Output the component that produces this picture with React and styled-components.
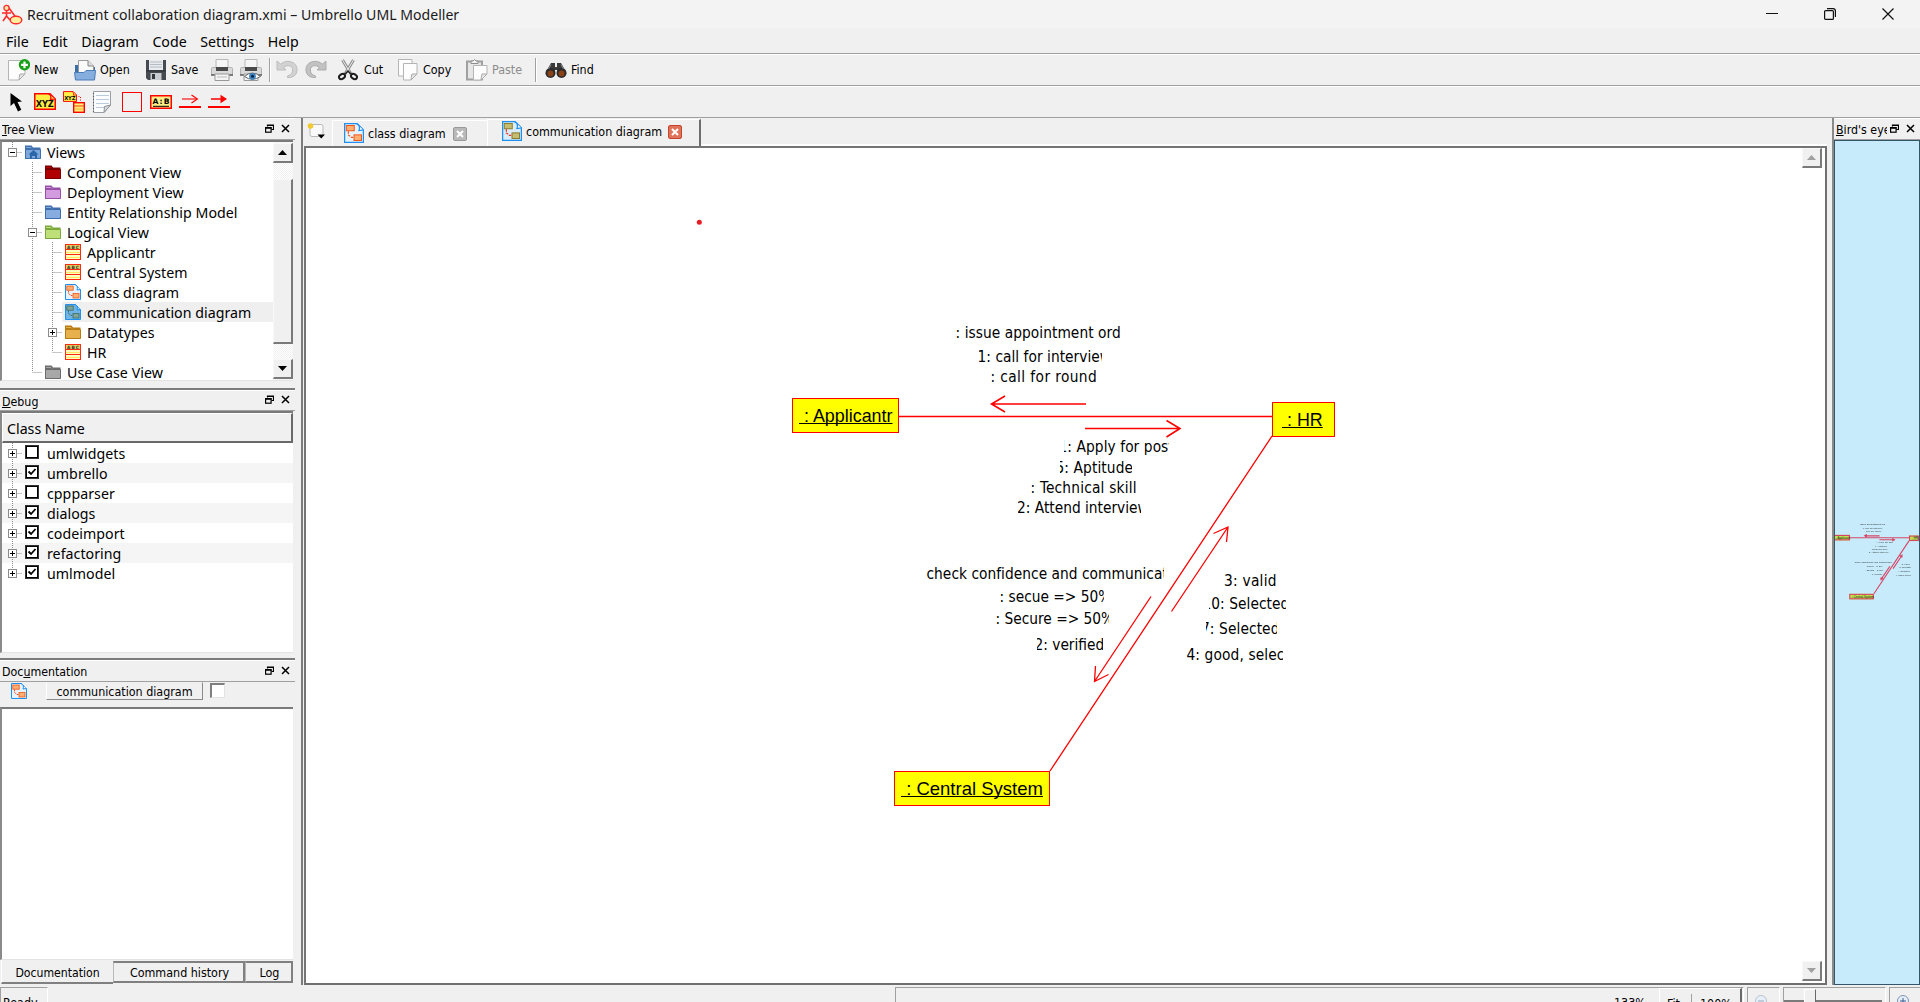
import React from "react";
import styled, { createGlobalStyle, css } from "styled-components";

const UI = '"Noto Sans", "Open Sans", sans-serif';
const SMALL = '"DejaVu Sans Condensed", "DejaVu Sans", sans-serif';

const Global = createGlobalStyle`
  * { box-sizing: border-box; }
  html, body { margin: 0; padding: 0; overflow: hidden; background: #f0f0f0; }
  svg { display: block; flex: none; }
`;

const Window = styled.div`
  width: 1920px;
  height: 1002px;
  display: flex;
  flex-direction: column;
  overflow: hidden;
  background: #f0f0f0;
  color: #000;
  font-family: ${UI};
  font-size: 14.2px;
`;

/* ---------- title, menu, toolbars ---------- */

const TitleBar = styled.header`
  flex: none;
  height: 28px;
  display: flex;
  align-items: center;
  gap: 4px;
  padding-left: 2px;
  background: #f3f3f3;
`;
const TitleText = styled.span`
  flex: 1;
  font-size: 14.1px;
  line-height: 28px;
  padding-top: 1px;
  color: #1a1a1a;
`;
const WindowButtons = styled.div`
  display: flex;
  gap: 46px;
  padding-right: 26px;
`;
const MenuBar = styled.nav`
  flex: none;
  height: 25px;
  display: flex;
  gap: 13.6px;
  padding: 3px 0 0 6px;
  font-size: 14.2px;
  line-height: 22px;
`;
const Toolbar = styled.div`
  flex: none;
  height: 32px;
  display: flex;
  align-items: center;
  border-top: 1px solid #a0a0a0;
  box-shadow: inset 0 1px 0 #fff;
  padding: ${(p) => p.$pt ?? 2}px 0 0 8px;
`;
const ToolButton = styled.div`
  flex: none;
  width: ${(p) => p.$w}px;
  display: flex;
  align-items: center;
  gap: ${(p) => p.$gap || 4}px;
  font: 12.4px/16px ${SMALL};
  color: ${(p) => (p.$off ? "#8c8c8c" : "#000")};
`;
const Sep = styled.i`
  flex: none;
  width: 2px;
  height: 24px;
  margin-right: ${(p) => p.$after}px;
  background: linear-gradient(90deg, #a0a0a0 50%, #fff 50%);
`;

/* ---------- docks ---------- */

const Workspace = styled.div`
  flex: none;
  height: 868px;
  display: flex;
  border-top: 1px solid #a0a0a0;
`;
const LeftColumn = styled.aside`
  flex: none;
  width: 295px;
  display: flex;
  flex-direction: column;
`;
const Dock = styled.section`
  flex: none;
  height: ${(p) => p.$h}px;
  width: 100%;
  display: flex;
  flex-direction: column;
  ${(p) => p.$ruled && css`border-top: 2px solid #7c7c7c;`}
`;
const DockTitle = styled.div`
  flex: none;
  height: ${(p) => p.$h || 22}px;
  display: flex;
  align-items: center;
  justify-content: space-between;
  border-top: 1px solid #fff;
  border-bottom: 1px solid #a0a0a0;
  padding: 0 5px 0 2px;
  font: 12.3px/18px ${SMALL};
  overflow: hidden;
  white-space: nowrap;
`;
const DockName = styled.span`
  overflow: hidden;
  padding-top: 2px;
  max-width: ${(p) => p.$max || 200}px;
`;
const DockButtons = styled.span`
  flex: none;
  display: flex;
  gap: 7px;
  padding-bottom: 2px;
`;
const Sunken = styled.div`
  flex: none;
  height: ${(p) => p.$h}px;
  width: 293px;
  display: flex;
  overflow: hidden;
  background: #fff;
  border: 1px solid #e3e3e3;
  border-right-width: 0;
  border-top: 2px solid #7a7a7a;
  border-left: 2px solid #8a8a8a;
`;
const List = styled.div`
  flex: 1;
  display: flex;
  flex-direction: column;
`;
const Row = styled.div`
  flex: none;
  height: 20px;
  display: flex;
  align-items: center;
  line-height: 20px;
  background: ${(p) => (p.$alt ? "#f5f5f5" : "transparent")};
`;
const RowBody = styled.div`
  flex: 1;
  height: 20px;
  display: flex;
  align-items: center;
  gap: 6px;
  padding-left: 3px;
  white-space: nowrap;
  background: ${(p) => (p.$selected ? "#efefef" : "transparent")};
`;
const RowText = styled.span`
  font-size: 14.2px;
  line-height: 20px;
  letter-spacing: 0.04px;
  padding-top: 1px;
`;
const CheckRow = styled(RowBody)`
  gap: 9px;
  padding-left: 4px;
`;
const Check = styled.i`
  width: 12px;
  height: 12px;
  margin-bottom: 2px;
  border: 1px solid #000;
  outline: 0.5px solid #333;
  display: flex;
  background: #fff;
`;
const Header = styled.div`
  flex: none;
  height: 30px;
  padding: 1px 0 0 4px;
  border: 1px solid #fff;
  border-right: 2px solid #696969;
  border-bottom: 2px solid #696969;
  background: #f0f0f0;
  line-height: 27px;
  font-size: 14.2px;
`;
const ScrollBar = styled.div`
  flex: none;
  width: 20px;
  display: flex;
  flex-direction: column;
  background: repeating-conic-gradient(#f0f0f0 0 25%, #fff 0 50%) 0 0 / 2px 2px;
`;
const Raised = styled.div`
  flex: none;
  width: ${(p) => p.$w || 20}px;
  height: ${(p) => p.$h || 20}px;
  display: flex;
  align-items: center;
  justify-content: center;
  background: #f0f0f0;
  border: 1px solid #f8f8f8;
  border-right: 2px solid #7a7a7a;
  border-bottom: 2px solid #7a7a7a;
  margin-top: ${(p) => p.$mt || 0}px;
`;
const DocBar = styled.div`
  flex: none;
  height: 25px;
  display: flex;
  padding-left: 11px;
  padding-top: 1px;
`;
const DocButton = styled.div`
  width: 157px;
  height: 18px;
  margin: -1px 7px 0 19px;
  text-align: center;
  border: 1px solid #fff;
  border-top-color: #f0f0f0;
  border-right-color: #8a8a8a;
  border-bottom-color: #8a8a8a;
  font: 12.4px/17px ${SMALL};
`;
const DocCheck = styled.i`
  width: 15px;
  height: 15px;
  background: #fff;
  border: 1px solid #e3e3e3;
  border-top: 2px solid #808080;
  border-left: 2px solid #808080;
`;
const BottomTabs = styled.div`
  flex: none;
  display: flex;
  align-items: flex-start;
  width: 294px;
  padding-left: 1px;
`;
const BottomTab = styled.div`
  width: ${(p) => p.$w}px;
  height: ${(p) => (p.$active ? 24 : 22)}px;
  margin-top: ${(p) => (p.$active ? 0 : 1)}px;
  padding-left: ${(p) => (p.$active ? 0 : 2)}px;
  text-align: center;
  font: ${(p) => (p.$active ? 12.15 : 12.4)}px/${(p) => (p.$active ? 26 : 20)}px ${SMALL};
  border-left: 1px solid ${(p) => (p.$active ? "#fff" : "#b8b8b8")};
  border-bottom: 2px solid #808080;
  border-right: ${(p) => (p.$active ? "0" : "2px solid #808080")};
  border-top: ${(p) => (p.$active ? "0" : "2px solid #808080")};
`;

/* ---------- editor ---------- */

const Editor = styled.main`
  flex: none;
  width: 1526px;
  margin-left: 6px;
  display: flex;
  flex-direction: column;
  border-left: 2px solid #7c7c7c;
`;
const TabRow = styled.div`
  flex: none;
  height: 28px;
  display: flex;
  align-items: flex-end;
`;
const NewTab = styled.div`
  width: 29px;
  height: 28px;
  padding: 5px 0 0 4px;
`;
const Tab = styled.div`
  flex: none;
  width: ${(p) => p.$w}px;
  height: ${(p) => (p.$active ? 27 : 26)}px;
  display: flex;
  align-items: flex-start;
  padding: ${(p) => (p.$active ? "1px 0 0 14px" : "2px 0 0 11px")};
  border-left: 1px solid #fff;
  border-top: 1px solid #fff;
  border-right: ${(p) => (p.$active ? "2px solid #6e6e6e" : "0")};
  font: 12.4px/20px ${SMALL};
`;
const TabText = styled.span`
  padding: 1px ${(p) => p.$pr || 6}px 0 4px;
`;
const TabClose = styled.i`
  width: 14px;
  height: 14px;
  margin-top: 4px;
  border-radius: 2px;
  display: flex;
  align-items: center;
  justify-content: center;
  background: ${(p) => (p.$hot ? "#e0735c" : "#b9b9b9")};
  border: 1px solid ${(p) => (p.$hot ? "#c4452b" : "#999")};
`;
const TabFill = styled.div`
  flex: 1;
  height: 2px;
  background: #fff;
`;
const CanvasFrame = styled.div`
  flex: 1;
  min-height: 0;
  margin-left: 1px;
  display: flex;
  border-top: 2px solid #757575;
  border-left: 2px solid #757575;
  border-right: 2px solid #707070;
  border-bottom: 2px solid #707070;
  background: #fff;
`;
const Canvas = styled.div`
  flex: 1;
  position: relative;
  overflow: hidden;
`;
const CanvasScroll = styled.div`
  flex: none;
  width: 23px;
  display: flex;
  flex-direction: column;
  justify-content: space-between;
  padding: 0 0 2px;
`;

/* Diagram items sit on a free canvas. */
const Scene = styled.div`
  position: absolute;
  left: ${(p) => p.$x}px;
  top: ${(p) => p.$y}px;
  width: 1920px;
  height: 1002px;
  transform-origin: 0 0;
  transform: scale(${(p) => p.$scale || 1});
  opacity: ${(p) => (p.$scale ? 0.85 : 1)};
`;
const Actor = styled.div`
  position: absolute;
  left: ${(p) => p.$x}px;
  top: ${(p) => p.$y}px;
  width: ${(p) => p.$w}px;
  height: 35px;
  padding-left: ${(p) => p.$pad || 6}px;
  white-space: pre;
  background: ${(p) => (p.$mini ? "#c4e02c" : "#ffff00")};
  border: ${(p) => (p.$mini ? 7 : 1)}px solid ${(p) => (p.$mini ? "#d8284a" : "#ff0000")};
  font: ${(p) => p.$fs}px/${(p) => (p.$mini ? 22 : 34)}px "Liberation Sans", Arial, sans-serif;
  text-decoration: underline;
  text-decoration-thickness: 1px;
  text-underline-offset: 1px;
  text-decoration-skip-ink: none;
`;
const Clip = styled.div`
  position: absolute;
  left: ${(p) => p.$x}px;
  top: ${(p) => p.$y - 15}px;
  width: ${(p) => p.$w}px;
  height: 20px;
  overflow: hidden;
  white-space: pre;
  font: 15.3px/20px ${SMALL};
`;
const ClipText = styled.span`
  display: block;
  width: max-content;
  margin-left: ${(p) => p.$shift}px;
  letter-spacing: ${(p) => p.$ls || 0}px;
`;
const Lines = styled.svg`
  position: absolute;
  left: 0;
  top: 0;
`;

const RightDock = styled.aside`
  flex: none;
  width: 88px;
  margin-left: 5px;
  height: 867px;
  display: flex;
  flex-direction: column;
  border-left: 2px solid #8a8a8a;
`;
const Bird = styled.div`
  flex: 1;
  position: relative;
  overflow: hidden;
  background: #c8ebfb;
  border: 1px solid #33566a;
`;

/* ---------- status bar ---------- */

const StatusBar = styled.footer`
  flex: none;
  height: 17px;
  display: flex;
  gap: 3px;
  padding-top: 2px;
  overflow: hidden;
  font: 12.4px/16px ${SMALL};
`;
const StatusCell = styled.div`
  flex: none;
  width: ${(p) => p.$w}px;
  height: 30px;
  margin-left: ${(p) => p.$ml || 0}px;
  display: flex;
  padding-left: ${(p) => p.$pl || 0}px;
  border-top: 1px solid #a0a0a0;
  border-left: 1px solid #a0a0a0;
  border-right: 1px solid #fff;
`;
const StatusText = styled.span`
  padding-top: 7px;
  width: ${(p) => p.$w || 40}px;
`;
const FitGroup = styled.div`
  width: 83px;
  height: 28px;
  display: flex;
  background: #f0f0f0;
  padding-left: 7px;
  border-left: 1px solid #fff;
  border-top: 1px solid #fff;
  border-right: 2px solid #696969;
`;
const FitRule = styled.i`
  width: 1px;
  height: 20px;
  margin: 5px 8px 0 0;
  background: #a0a0a0;
`;
const Groove = styled.i`
  height: 3px;
  margin-top: 12px;
  width: ${(p) => p.$w}px;
  border-top: 2px solid #7a7a7a;
`;
const Knob = styled.i`
  width: 12px;
  height: 26px;
  margin-top: 1px;
  background: #f0f0f0;
  border-left: 1px solid #fff;
  border-top: 1px solid #fff;
  border-right: 1px solid #696969;
`;

/* ---------- drawings ---------- */

const Page = ({ x = 0, y = 0, w = 15, h = 19 }) => (
  <g transform={`translate(${x} ${y})`}>
    <path d={`M.5 .5H${w}V${h - 6}L${w - 6} ${h}H.5Z`} fill="#fdfdfd" stroke="#b4b4b4" />
    <path d={`M${w} ${h - 6}H${w - 5}Q${w - 6} ${h - 2} ${w - 6} ${h}Z`} fill="#e8e8e8" stroke="#a8a8a8" />
  </g>
);
const I = ({ s = 22, h, children, vb }) => (
  <svg width={s} height={h || s} viewBox={vb || `0 0 ${s} ${h || s}`} fill="none">{children}</svg>
);
const NewIcon = () => (
  <I><Page x={0} y={1} w={17} h={20} /><circle cx="16.5" cy="5.8" r="5.7" fill="#16a016" /><path d="M16.5 2.4V9.2M13.1 5.8H19.9" stroke="#fff" strokeWidth="2.2" /></I>
);
const OpenIcon = () => (
  <I><path d="M1 6H7L9 8H21V20H1Z" fill="#3a6ea8" /><path d="M4.500 1.500H14L19.500 7V14H4.500Z" fill="#fafafa" stroke="#9a9a9a" /><path d="M14 1.500V7H19.500" fill="#ddd" stroke="#888" /><path d="M.5 13.500H10L12 11.500H21.500L20.500 21H1.500Z" fill="#86aede" stroke="#4b7dba" /></I>
);
const SaveIcon = () => (
  <I><path d="M0 1H20V21H2L0 19Z" fill="#454a50" /><rect x="3" y="1" width="14" height="10" fill="#e9ecef" /><path d="M4 3H16M4 5.500H16M4 8H16" stroke="#b4bac2" /><rect x="4.500" y="14" width="11" height="7" fill="#c9cccf" /><rect x="6" y="15" width="3" height="5" fill="#33373c" /><path d="M0 12H20" stroke="#2c2f33" /></I>
);
const PrintIcon = ({ eye }) => (
  <I><path d="M5 9V.5H17V9" fill="#f6f6f6" stroke="#b8b8b8" /><path d="M.5 9.500Q.5 8.500 1.500 8.500H20.500Q21.500 8.500 21.500 9.500V15.500H.5Z" fill="#d9d9d9" stroke="#b0b0b0" /><rect x="5" y="8" width="12" height="4" fill="#4a4a4a" /><path d="M0 16H22" stroke="#666" strokeWidth="1.600" /><path d="M4 15H18V21.500H4Z" fill="#f4f4f4" stroke="#999" /><path d="M6 18H16" stroke="#bbb" />
    {eye && <><path d="M4.500 17.500Q12 10.500 20.500 17.500Q12 23 4.500 17.500Z" fill="#fff" stroke="#666" /><circle cx="12.500" cy="17.300" r="3.400" fill="#3b82c4" /><circle cx="12.500" cy="17.300" r="1.500" fill="#10243c" /></>}
  </I>
);
const UndoIcon = ({ flip }) => (
  <I><g transform={flip ? "translate(22 0) scale(-1 1)" : undefined}><path d="M1 2V11H10L7.500 8.500Q11 5.500 14.500 7Q17.500 9 16.500 13Q15.500 16 11.500 17V18.500Q18 19 20.500 14Q22.500 8 18 4.200Q11.500 0 4.500 5Z" fill={flip ? "#c2c2c2" : "#d2d2d2"} stroke={flip ? "#adadad" : "#bdbdbd"} /></g></I>
);
const CutIcon = () => (
  <I s={20} h={22}><path d="M4.500 1L13 15M15.500 1L7 15" stroke="#8c8c8c" strokeWidth="3" /><path d="M4.500 1L13 15M15.500 1L7 15" stroke="#eee" strokeWidth="1" /><ellipse cx="4" cy="17.500" rx="3.200" ry="2.300" transform="rotate(-35 4 17.500)" stroke="#1c1c1c" strokeWidth="2" /><ellipse cx="16" cy="17.500" rx="3.200" ry="2.300" transform="rotate(35 16 17.500)" stroke="#1c1c1c" strokeWidth="2" /><path d="M7 15L10 12L13 15" stroke="#222" strokeWidth="1.500" /></I>
);
const CopyIcon = () => (<I s={21} h={22}><Page x={0} y={0} w={14} h={17} /><Page x={5} y={4} w={14} h={17} /></I>);
const PasteIcon = () => (
  <I><rect x="1" y="2.500" width="15" height="18" fill="#e6e6e6" stroke="#a0a0a0" strokeWidth="2" /><path d="M5 4.500V2H7Q8.500-1 10 2H12V4.500Z" fill="#f4f4f4" stroke="#8c8c8c" /><Page x={7} y={6} w={14} h={15} /></I>
);
const FindIcon = () => (
  <I><path d="M2 11L6 4H10V8H12V4H16L20 11L21.500 15H12V11H10V15H.5Z" fill="#3a3a3a" /><circle cx="5.500" cy="14" r="5" fill="#2b2b2b" /><circle cx="16.500" cy="14" r="5" fill="#2b2b2b" /><circle cx="5.500" cy="14.500" r="3" fill="#8a4216" /><circle cx="16.500" cy="14.500" r="3" fill="#8a4216" /><path d="M6 5.500L3.500 10M16 5.500L18.500 10" stroke="#888" /></I>
);
const CursorIcon = () => (<I s={16} h={20}><path d="M2.500 1V14L6 11L10 19.500L13.300 17.800L9.500 10L14 9.500Z" fill="#000" /></I>);
const XyzShape = () => (
  <><path d="M.75 .75H16L21.250 6V16.250H.75Z" fill="#ffee44" stroke="#ff0000" strokeWidth="1.500" /><path d="M14.500 1Q18 2.500 16.500 6.500L21 6" fill="#ffd75a" stroke="#ff0000" strokeWidth="1.200" /><text x="1.800" y="14.200" fontFamily="DejaVu Sans, sans-serif" fontWeight="700" fontSize="8.400" textLength="18" fill="#111">XYZ</text></>
);
const XyzIcon = () => (<I h={17}><XyzShape /></I>);
const XyzLinkIcon = () => (
  <I><svg width="14" height="11" viewBox="0 0 22 17"><XyzShape /></svg><path d="M13 5.500H17.500V11" stroke="#ff0000" strokeDasharray="1 1.500" /><rect x="10.700" y="11.700" width="10.600" height="9.600" fill="#ffef70" stroke="#ff0000" strokeWidth="1.400" /><path d="M11 15H21" stroke="#ff3a20" /><path d="M12 18H20" stroke="#f0b040" /></I>
);
const NoteIcon = () => (
  <I s={20} h={22}><path d="M1.500 .5H18.500V14L12 21.500H1.500Z" fill="#fbfcfd" stroke="#9aa0a6" /><path d="M4 4.500H17M4 8.500H17M4 12.500H17M4 16.500H12" stroke="#b9cbdd" /><path d="M18.500 14L12.500 15.500L12 21.500Z" fill="#ddd" stroke="#8c9196" /><path d="M1.500 2V21" stroke="#555" strokeDasharray="1 2" /></I>
);
const BoxIcon = () => (<I s={20}><rect x=".5" y=".5" width="19" height="19" stroke="#ff0000" /></I>);
const AbIcon = () => (
  <I h={14}><rect x=".75" y=".75" width="20.500" height="12.500" fill="#ffef86" stroke="#ff0000" strokeWidth="1.500" /><text x="2.500" y="9.400" fontFamily="DejaVu Sans, sans-serif" fontWeight="700" fontSize="7.600" textLength="17" fill="#000">A:B</text><path d="M3 11.300H19" stroke="#000" /></I>
);
const ArrowIcon = ({ solid }) => (
  <I h={16}><path d="M0 13H22" stroke="#ff0000" strokeWidth="2" /><path d="M3 5H18" stroke="#ff0000" strokeWidth={solid ? 1.500 : 1.100} />{solid ? <path d="M12.500 .8L19 5L12.500 9.200Z" fill="#ff0000" /> : <path d="M12.500 1L18.500 5L12.500 9" stroke="#ff0000" strokeWidth="1.100" />}</I>
);
const AppIcon = () => (
  <I s={21}><path d="M7 4L15 15" stroke="#ff2a2a" strokeWidth="1.600" /><circle cx="4.500" cy="4" r="2.600" fill="#ffe9a8" stroke="#ff2a2a" strokeWidth="1.300" /><path d="M0 9H9M4.500 7V12L1 17M4.500 12L8 16" stroke="#ff2a2a" strokeWidth="1.600" /><ellipse cx="14" cy="16" rx="5.800" ry="3.800" fill="#ffee9c" stroke="#ff2a2a" strokeWidth="1.400" /></I>
);
const Folder = ({ c, home }) => (
  <I s={16}><path d="M0 1.500H6.500L8 3.500H15.500V15H0Z" fill={c[1]} /><path d="M.5 5.500H15.500V14.500H.5Z" fill={c[0]} stroke={c[1]} /><path d="M1 3.500H6L7 4.500" stroke={c[0]} />{home && <path d="M3.500 10.500L8.500 6L13.500 10.500H12V15H10V12H7V15H5V10.500Z" fill="#2c65a8" />}</I>
);
const ClassIcon = () => (
  <I s={16}><rect x=".5" y=".5" width="15" height="15" fill="#ffffc0" stroke="#ff2a10" /><rect x="1" y="1" width="14" height="4" fill="#e0cc60" /><text x="2" y="4.800" fontFamily="DejaVu Sans, sans-serif" fontWeight="700" fontSize="4.400" textLength="12" fill="#333">ABC</text><path d="M0 5.500H16M0 10.500H16" stroke="#ff2a10" /><path d="M1 8.500H15M1 13.500H15" stroke="#ffe860" /></I>
);
const DiagramIcon = ({ s = 16, kind }) => {
  const [bg, fg, edge] = { cls: ["#e6f3ff", "#ffb070", "#f0561c"], com: ["#d8ecfa", "#c4bc70", "#8a7c2c"], sel: ["#6fb4e4", "#7fa696", "#3c6c6c"] }[kind];
  return (
    <I s={s} vb="0 0 16 16"><path d="M.5 .5H10.500L15.500 5.500V15.500H.5Z" fill={bg} stroke="#1e90f0" /><path d="M10 .6Q13.500 2 12 6L15.500 5.500" fill={kind === "sel" ? "#a8d4f0" : "#fff"} stroke="#1e90f0" /><rect x="1.800" y="2" width="6.400" height="4.200" fill={fg} stroke={edge} strokeWidth=".8" /><rect x="8" y="9.500" width="6" height="4.500" fill={fg} stroke={edge} strokeWidth=".8" /><path d="M3.500 6.500V9.500L6 11.500H8" stroke={kind === "com" ? "#f03020" : edge} strokeDasharray="2 .8" /></I>
  );
};
const Guide = ({ t }) => (
  <I s={20}>
    <g stroke="#8c8c8c" strokeDasharray="1 1">
      {/[vt]/.test(t) && <path d="M10.500 0V20" />}
      {/[et]/.test(t) && <path d="M10.500 10.500H20" />}
      {t[0] === "e" && <path d="M10.500 0V10" />}
    </g>
    {/[+-]/.test(t) && <><rect x="6.500" y="6.500" width="8" height="8" fill="#fff" stroke="#8c8c8c" /><path d="M8 10.500H13" stroke="#000" />{t.includes("+") && <path d="M10.500 8V13" stroke="#000" />}</>}
  </I>
);
const FloatIcon = () => (<I s={9}><path d="M2.500 2.500V1H8.500V5.500H6.500M2.500 1.500H8.500" stroke="#000" strokeWidth="1.200" /><rect x=".6" y="3.600" width="5.500" height="4.600" stroke="#000" strokeWidth="1.200" /><path d="M0 4H6.500" stroke="#000" strokeWidth="1.500" /></I>);
const CloseIcon = () => (<I s={9}><path d="M1 1L8 8M8 1L1 8" stroke="#000" strokeWidth="1.500" /></I>);
const Tri = ({ down, c = "#000", s = 9 }) => (<svg width={s} height="5" viewBox="0 0 9 5"><path d={down ? "M0 0H9L4.500 5Z" : "M0 5H9L4.500 0Z"} fill={c} /></svg>);
const ZoomGlass = ({ plus }) => (<I s={14}><circle cx="6" cy="6" r="5.500" fill="#e6eef8" stroke={plus ? "#7d94b4" : "#b8c2d0"} /><path d={plus ? "M3 6H9M6 3V9" : "M3 6H9"} stroke={plus ? "#3a5c90" : "#9aa8bc"} /></I>);

/* ---------- data ---------- */

const BLUE = ["#86ace0", "#3f6cab"];
const TREE = [
  ["-e", "Views", <Folder c={["#7ea8dc", "#3f6fae"]} home />],
  [" t", "Component View", <Folder c={["#b00000", "#780000"]} />],
  [" t", "Deployment View", <Folder c={["#d49be0", "#9650a8"]} />],
  [" t", "Entity Relationship Model", <Folder c={BLUE} />],
  [" t-", "Logical View", <Folder c={["#bfe078", "#7ba83c"]} />],
  [" vt", "Applicantr", <ClassIcon />],
  [" vt", "Central System", <ClassIcon />],
  [" vt", "class diagram", <DiagramIcon kind="cls" />],
  [" vt", "communication diagram", <DiagramIcon kind="sel" />, true],
  [" vt+", "Datatypes", <Folder c={["#e8b04c", "#b87c14"]} />],
  [" ve", "HR", <ClassIcon />],
  [" e", "Use Case View", <Folder c={["#a8a8a8", "#6c6c6c"]} />],
];
const cells = (code) => (code === "-e" ? ["e-"] : code.match(/[ vte][+-]?/g));

const CLASSES = [["umlwidgets", 0], ["umbrello", 1], ["cppparser", 0], ["dialogs", 1], ["codeimport", 1], ["refactoring", 1], ["umlmodel", 1]];

/* text, clip left, clip right, text start, baseline, letter spacing */
const LABELS = [
  [": issue appointment order", 955, 1120.5, 955.5, 338, 0.06],
  ["1: call for interview", 979, 1102, 977.5, 362, 0.04],
  [": call for round", 990, 1098, 990.5, 382, 0.4],
  ["1: Apply for post", 1064, 1169, 1058.5, 452, 0.08],
  ["5: Aptitude", 1059.5, 1131.5, 1055.5, 473, 0.1],
  [": Technical skill", 1030, 1138, 1030.5, 493, 0.2],
  ["2: Attend interview", 1018, 1141, 1017, 513],
  ["check confidence and communication", 926, 1164, 926.5, 579, 0.04],
  [": secue => 50%", 998, 1104, 999.5, 602],
  [": Secure => 50%", 994, 1109, 995.5, 624],
  ["2: verified", 1037, 1103, 1034.5, 650],
  ["3: valid", 1223, 1279, 1224, 586, 0.25],
  ["10: Selected", 1209, 1285.5, 1202.5, 609, 0.05],
  ["7: Selected", 1206, 1276.5, 1201, 634, 0.1],
  ["4: good, selected", 1187, 1283, 1186.5, 660, 0.12],
];

const Diagram = ({ mini }) => {
  const line = mini ? "#d8284a" : "#ff0000";
  return (
    <>
      <Lines width="1920" height="1002" fill="none" stroke={line} strokeWidth={mini ? 7 : 1.3}>
        <path d="M898 416.500H1272M1272 436L1050 771" />
        <path d="M1086 404H992M1005 396L991.500 404L1005 412" strokeWidth={mini ? 7 : 1.6} />
        <path d="M1085 428.500H1180M1166.500 420.500L1180 428.500L1166.500 437" strokeWidth={mini ? 7 : 1.6} />
        <path d="M1171.500 611.500L1228 527M1213.500 533.500L1228 527L1226.500 542" />
        <path d="M1151 596.500L1094.500 681.500M1095.500 666L1094.500 681.500L1108.500 674.500" />
        {!mini && <circle cx="699.300" cy="222.300" r="2.500" fill="#e81c24" stroke="none" />}
      </Lines>
      <Actor $mini={mini} $x={792} $y={398} $w={107} $fs={17.9}>{" : Applicantr"}</Actor>
      <Actor $mini={mini} $x={1272} $y={402} $w={63} $fs={17.9} $pad={9}>{" : HR"}</Actor>
      <Actor $mini={mini} $x={894} $y={771} $w={156} $fs={18.5}>{" : Central System"}</Actor>
      {LABELS.map(([t, l, r, s, b, ls]) => (
        <Clip key={t} $x={l} $y={b} $w={r - l}><ClipText $shift={s - l} $ls={ls}>{t}</ClipText></Clip>
      ))}
    </>
  );
};

const Title = ({ pre = "", k, rest, h, max }) => (
  <DockTitle $h={h}>
    <DockName $max={max}>{pre}<u>{k}</u>{rest}</DockName>
    <DockButtons><FloatIcon /><CloseIcon /></DockButtons>
  </DockTitle>
);

export default function App() {
  return (
    <Window>
      <Global />
      <TitleBar>
        <AppIcon />
        <TitleText>Recruitment collaboration diagram.xmi – Umbrello UML Modeller</TitleText>
        <WindowButtons>
          <I s={12}><path d="M0 5.500H12" stroke="#111" /></I>
          <I s={12}><rect x=".6" y="2.600" width="8.800" height="8.800" rx="1" stroke="#111" strokeWidth="1.200" /><path d="M3 .6H9Q11.400 .6 11.400 3V9" stroke="#111" strokeWidth="1.200" /></I>
          <I s={12}><path d="M.5 .5L11.500 11.500M11.500 .5L.5 11.500" stroke="#111" strokeWidth="1.200" /></I>
        </WindowButtons>
      </TitleBar>
      <MenuBar>
        {["File", "Edit", "Diagram", "Code", "Settings", "Help"].map((m) => <span key={m}>{m}</span>)}
      </MenuBar>
      <Toolbar $pt={1}>
        <ToolButton $w={66}><NewIcon />New</ToolButton>
        <ToolButton $w={72}><OpenIcon />Open</ToolButton>
        <ToolButton $w={65} $gap={3}><SaveIcon />Save</ToolButton>
        <ToolButton $w={29}><PrintIcon /></ToolButton>
        <ToolButton $w={29}><PrintIcon eye /></ToolButton>
        <Sep $after={5} />
        <ToolButton $w={29}><UndoIcon /></ToolButton>
        <ToolButton $w={33}><UndoIcon flip /></ToolButton>
        <ToolButton $w={60} $gap={6}><CutIcon />Cut</ToolButton>
        <ToolButton $w={68}><CopyIcon />Copy</ToolButton>
        <ToolButton $w={69} $off><PasteIcon />Paste</ToolButton>
        <Sep $after={8} />
        <ToolButton $w={60}><FindIcon />Find</ToolButton>
      </Toolbar>
      <Toolbar $pt={0}>
        <ToolButton $w={26}><CursorIcon /></ToolButton>
        <ToolButton $w={29}><XyzIcon /></ToolButton>
        <ToolButton $w={29}><XyzLinkIcon /></ToolButton>
        <ToolButton $w={30}><NoteIcon /></ToolButton>
        <ToolButton $w={28}><BoxIcon /></ToolButton>
        <ToolButton $w={29}><AbIcon /></ToolButton>
        <ToolButton $w={29}><ArrowIcon /></ToolButton>
        <ToolButton $w={29}><ArrowIcon solid /></ToolButton>
      </Toolbar>

      <Workspace>
        <LeftColumn>
          <Dock $h={270}>
            <Title k="T" rest="ree View" />
            <Sunken $h={241}>
              <List>
                {TREE.map(([code, name, icon, sel]) => (
                  <Row key={name}>
                    {cells(code).map((t, i) => <Guide key={i} t={t} />)}
                    <RowBody $selected={sel}>{icon}<RowText>{name}</RowText></RowBody>
                  </Row>
                ))}
              </List>
              <ScrollBar>
                <Raised $mt={1}><Tri /></Raised>
                <Raised $h={165} $mt={16} />
                <Raised $mt={15}><Tri down /></Raised>
              </ScrollBar>
            </Sunken>
          </Dock>
          <Dock $h={270} $ruled>
            <Title k="D" rest="ebug" h={21} />
            <Sunken $h={242}>
              <List>
                <Header>Class Name</Header>
                {CLASSES.map(([name, on], i) => (
                  <Row key={name} $alt={i % 2 === 1}>
                    <Guide t={i === 6 ? "e+" : "t+"} />
                    <CheckRow>
                      <Check>{on ? <I s={10}><path d="M1.500 4.500L4 7L8.500 2" stroke="#000" strokeWidth="1.800" /></I> : null}</Check>
                      <RowText>{name}</RowText>
                    </CheckRow>
                  </Row>
                ))}
              </List>
            </Sunken>
          </Dock>
          <Dock $h={327} $ruled>
            <Title pre="Doc" k="u" rest="mentation" h={22} />
            <DocBar>
              <DiagramIcon kind="cls" />
              <DocButton>communication diagram</DocButton>
              <DocCheck />
            </DocBar>
            <Sunken $h={253} />
            <BottomTabs>
              <BottomTab $w={112} $active>Documentation</BottomTab>
              <BottomTab $w={132}>Command history</BottomTab>
              <BottomTab $w={48}>Log</BottomTab>
            </BottomTabs>
          </Dock>
        </LeftColumn>

        <Editor>
          <TabRow>
            <NewTab>
              <I s={19} h={17}><rect x="3" y="1.500" width="13" height="12" rx="2" fill="#fafafa" stroke="#b8b8b8" /><circle cx="3.500" cy="3" r="2.800" fill="#f0c830" /><path d="M10.500 11.500H18L14.200 15.500Z" fill="#000" /></I>
            </NewTab>
            <Tab $w={155}><DiagramIcon s={20} kind="cls" /><TabText $pr={7}>class diagram</TabText>
              <TabClose><I s={8}><path d="M1 1L7 7M7 1L1 7" stroke="#fff" strokeWidth="2" /></I></TabClose></Tab>
            <Tab $w={214} $active><DiagramIcon s={20} kind="com" /><TabText>communication diagram</TabText>
              <TabClose $hot><I s={8}><path d="M1 1L7 7M7 1L1 7" stroke="#fff" strokeWidth="2" /></I></TabClose></Tab>
            <TabFill />
          </TabRow>
          <CanvasFrame>
            <Canvas><Scene $x={-306} $y={-148}><Diagram /></Scene></Canvas>
            <CanvasScroll>
              <Raised><Tri c="#a0a0a0" /></Raised>
              <Raised><Tri down c="#a0a0a0" /></Raised>
            </CanvasScroll>
          </CanvasFrame>
        </Editor>

        <RightDock>
          <Title k="B" rest="ird's eye view" max={51} />
          <Bird><Scene $x={-127.500} $y={330.500} $scale={0.158}><Diagram mini /></Scene></Bird>
        </RightDock>
      </Workspace>

      <StatusBar>
        <StatusCell $w={48} $pl={2}><StatusText>Ready</StatusText></StatusCell>
        <StatusCell $w={849} $ml={844} $pl={718}>
          <StatusText $w={45}>133%</StatusText>
          <FitGroup>
            <StatusText $w={24}>Fit</StatusText><FitRule /><StatusText>100%</StatusText>
          </FitGroup>
        </StatusCell>
        <StatusCell $w={33} $pl={7}><StatusText><ZoomGlass /></StatusText></StatusCell>
        <StatusCell $w={103}><Groove $w={20} /><Knob /><Groove $w={66} /></StatusCell>
        <StatusCell $w={40} $pl={7}><StatusText><ZoomGlass plus /></StatusText></StatusCell>
      </StatusBar>
    </Window>
  );
}
